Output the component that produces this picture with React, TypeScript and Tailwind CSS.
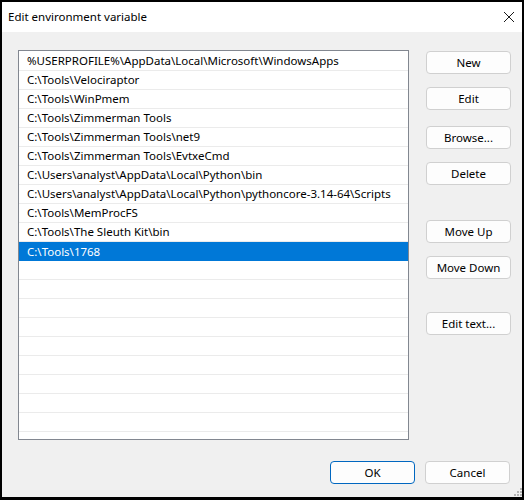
import React from "react";

const paths = [
  "%USERPROFILE%\\AppData\\Local\\Microsoft\\WindowsApps",
  "C:\\Tools\\Velociraptor",
  "C:\\Tools\\WinPmem",
  "C:\\Tools\\Zimmerman Tools",
  "C:\\Tools\\Zimmerman Tools\\net9",
  "C:\\Tools\\Zimmerman Tools\\EvtxeCmd",
  "C:\\Users\\analyst\\AppData\\Local\\Python\\bin",
  "C:\\Users\\analyst\\AppData\\Local\\Python\\pythoncore-3.14-64\\Scripts",
  "C:\\Tools\\MemProcFS",
  "C:\\Tools\\The Sleuth Kit\\bin",
  "C:\\Tools\\1768",
];

const SELECTED = 10;
const TOTAL_ROWS = 21;

function Btn({ label, className = "" }: { label: string; className?: string }) {
  return (
    <button
      className={
        "h-[23px] w-[85px] rounded-[4px] border border-[#d0d0d0] bg-[#fdfdfd] text-[11.5px] leading-none text-black " +
        className
      }
    >
      {label}
    </button>
  );
}

export default function App() {
  const rows = Array.from({ length: TOTAL_ROWS }, (_, i) => paths[i] ?? "");
  return (
    <div
      className="relative flex h-[500px] w-[524px] flex-col bg-black pb-[3px] pl-[2px] pr-[2px] pt-[2px]"
      style={{ fontFamily: '"Noto Sans", "Open Sans", sans-serif' }}
    >
      {/* title bar */}
      <div className="flex h-[30px] items-center justify-between bg-white pl-[6px] pr-[7px]">
        <span className="text-[11.5px] text-black">Edit environment variable</span>
        <svg width="12" height="12" viewBox="0 0 12 12" className="mt-[-1px]">
          <path d="M1 1 L11 11 M11 1 L1 11" stroke="#1a1a1a" strokeWidth="1" fill="none" />
        </svg>
      </div>

      {/* dialog body */}
      <div className="flex flex-1 flex-col bg-[#f0f0f0] pl-[16px] pt-[18px]">
        <div className="flex">
          <div className="h-[390px] w-[391px] overflow-hidden border border-[#828790] bg-white pt-[1px]">
            {rows.map((p, i) => (
              <div
                key={i}
                className={
                  "flex h-[19px] items-center pl-[8px] text-[11.5px] whitespace-nowrap " +
                  (i === SELECTED
                    ? "bg-[#0078d7] text-white"
                    : "border-b border-[#ebebeb] text-black")
                }
              >
                {p}
              </div>
            ))}
          </div>

          <div className="ml-[17px] flex flex-col pt-[1px]">
            <Btn label="New" />
            <Btn label="Edit" className="mt-[13px]" />
            <Btn label="Browse..." className="mt-[16px]" />
            <Btn label="Delete" className="mt-[13px]" />
            <Btn label="Move Up" className="mt-[35px]" />
            <Btn label="Move Down" className="mt-[13px]" />
            <Btn label="Edit text..." className="mt-[33px]" />
          </div>
        </div>

        <div className="mt-[21px] flex justify-end gap-[10px] pr-[12px]">
          <Btn label="OK" className="!border-[#0067c0]" />
          <Btn label="Cancel" />
        </div>
      </div>

      {/* size grip */}
      <svg width="8" height="8" viewBox="0 0 8 8" className="absolute bottom-[4px] right-[2px]">
        {[
          [6, 0],
          [3, 3],
          [6, 3],
          [0, 6],
          [3, 6],
          [6, 6],
        ].map(([x, y], i) => (
          <rect key={i} x={x} y={y} width="2" height="2" fill="#b4b4b4" />
        ))}
      </svg>
    </div>
  );
}
